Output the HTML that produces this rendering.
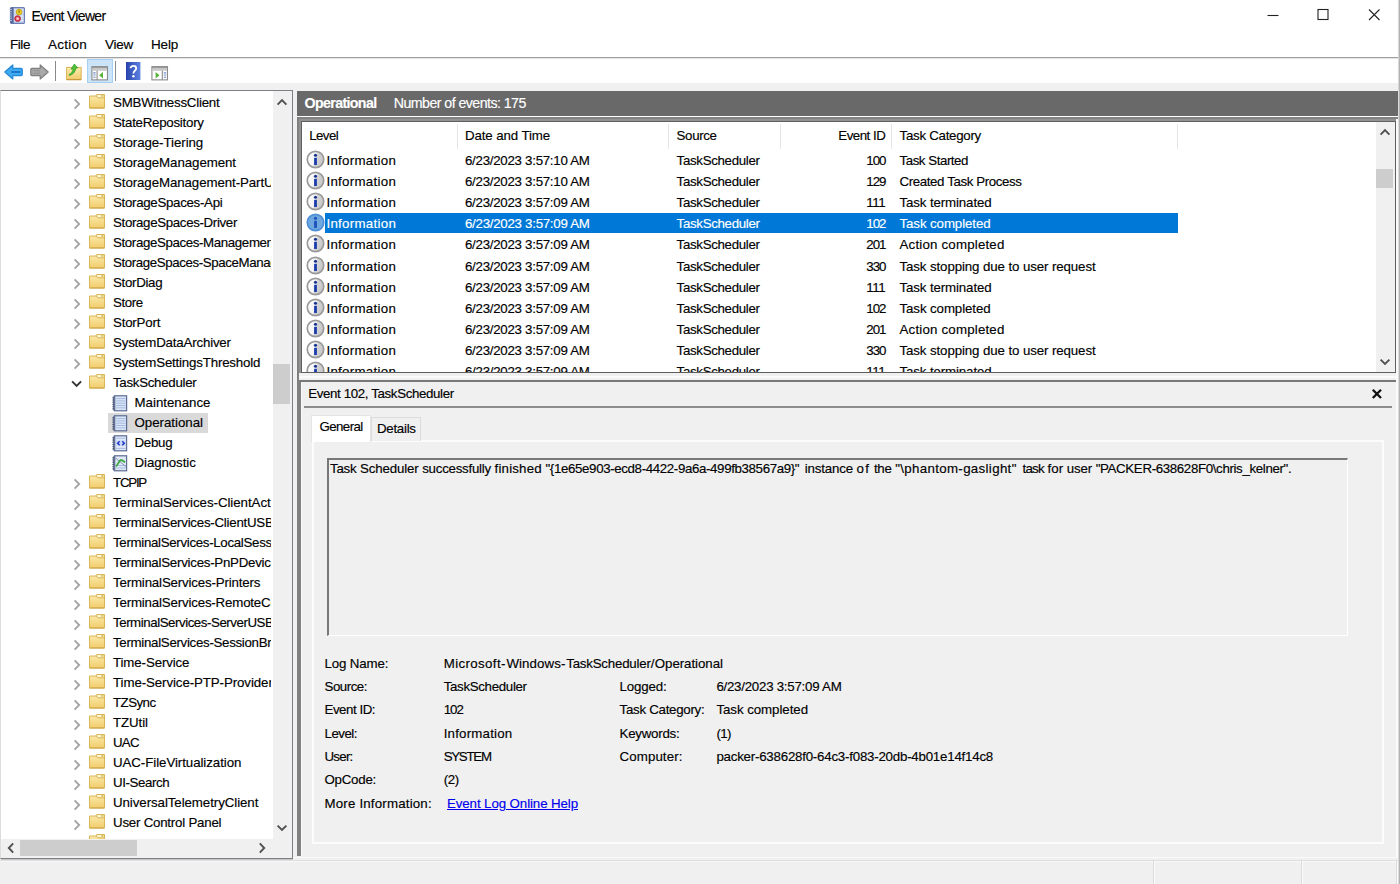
<!DOCTYPE html>
<html><head><meta charset="utf-8"><title>Event Viewer</title>
<style>
*{box-sizing:border-box;margin:0;padding:0}
html,body{width:1400px;height:884px;overflow:hidden;background:#fff}
body{position:relative;font-family:"Liberation Sans",sans-serif;font-size:13.3px;line-height:16px;color:#000;-webkit-text-stroke:0.15px}
.t{position:absolute;white-space:pre;line-height:16px;height:16px}
.b{position:absolute}
svg{position:absolute;overflow:visible}
.clip{position:absolute;overflow:hidden}
a.t{color:#0000ee;text-decoration:underline}

</style></head>
<body>
<svg width="0" height="0" style="position:absolute">
<defs>
<linearGradient id="gFold" x1="0" y1="0" x2="0" y2="1"><stop offset="0" stop-color="#fcebb0"/><stop offset="1" stop-color="#f1cd6c"/></linearGradient>
<linearGradient id="gInfo" x1="0" y1="0" x2="1" y2="0.3"><stop offset="0" stop-color="#ffffff"/><stop offset="0.55" stop-color="#f4f4f4"/><stop offset="0.62" stop-color="#d6d6d6"/><stop offset="1" stop-color="#c8c8c8"/></linearGradient>
<linearGradient id="gHelp" x1="0" y1="0" x2="1" y2="0"><stop offset="0" stop-color="#2743ab"/><stop offset="1" stop-color="#5d82e2"/></linearGradient>
<linearGradient id="gLog" x1="0" y1="0" x2="1" y2="0"><stop offset="0" stop-color="#dfe9f8"/><stop offset="1" stop-color="#ffffff"/></linearGradient>
</defs>
</svg>

<svg style="left:9px;top:7px" width="16" height="17" viewBox="0 0 16 17">
<rect x="1.6" y="0.6" width="13.8" height="15.8" rx="1" fill="#c9d5ee" stroke="#6a7fb4" stroke-width="1.2"/>
<rect x="1.6" y="0.6" width="3" height="15.8" fill="#55689c"/>
<path d="M0.3 2.5H3M0.3 4.7H3M0.3 6.9H3M0.3 9.1H3M0.3 11.3H3M0.3 13.5H3" stroke="#b9c2d8" stroke-width="0.9"/>
<path d="M5.5 9.2H14.5M5.5 11.4H14.5M5.5 13.6H14.5M5.5 3H14.5M5.5 5.2H14.5" stroke="#e8eefb" stroke-width="0.8"/>
<circle cx="10.1" cy="5" r="2.9" fill="#e8cf2e" stroke="#bfa313" stroke-width="0.8"/>
<rect x="9.6" y="3.2" width="1" height="2.6" fill="#7a6200"/>
<circle cx="8.6" cy="11.6" r="2.9" fill="#d8394a" stroke="#b12236" stroke-width="0.8"/>
<rect x="7.4" y="10.4" width="2.4" height="2.4" fill="#ffd9de"/>
</svg>
<span class="t" style="top:7.76px;left:31.40px;font-size:14px;letter-spacing:-0.686px">Event Viewer</span>
<svg style="left:1260px;top:0" width="140" height="30" viewBox="0 0 140 30">
<path d="M7.5 15.5H18.5" stroke="#222" stroke-width="1.1"/>
<rect x="58" y="9.5" width="10" height="10" fill="none" stroke="#222" stroke-width="1.1"/>
<path d="M109 9.5L119.5 20M119.5 9.5L109 20" stroke="#222" stroke-width="1.1"/>
</svg>
<span class="t" style="top:36.74px;left:10.00px;font-size:13.5px;letter-spacing:-0.441px">File</span>
<span class="t" style="top:36.74px;left:48.00px;font-size:13.5px;letter-spacing:0.245px">Action</span>
<span class="t" style="top:36.74px;left:105.00px;font-size:13.5px;letter-spacing:-0.258px">View</span>
<span class="t" style="top:36.74px;left:151.00px;font-size:13.5px;letter-spacing:-0.191px">Help</span>
<div class="b" style="left:0px;top:57px;width:1400px;height:1px;background:#a0a0a0"></div>
<div class="b" style="left:0px;top:58px;width:1400px;height:1px;background:#e4e4e4"></div>
<div class="b" style="left:87px;top:59px;width:26px;height:24px;background:#cce4f7;border:1px solid #a5d0f3"></div>
<div class="b" style="left:55px;top:61px;width:1px;height:20px;background:#8a8a8a"></div>
<div class="b" style="left:115px;top:61px;width:1px;height:20px;background:#8a8a8a"></div>
<svg style="left:4.2px;top:63.8px" width="19" height="16" viewBox="0 0 19 16">
<path d="M0.8 8 L8.8 1 V4.4 H17 Q18.3 4.4 18.3 5.7 V10.3 Q18.3 11.6 17 11.6 H8.8 V15 Z" fill="#3ea9ef" stroke="#2388d6" stroke-width="1.2" stroke-linejoin="round"/>
<path d="M8 8H15.6" stroke="#1a78cc" stroke-width="2" stroke-linecap="round"/>
</svg>
<svg style="left:29.8px;top:63.8px" width="19" height="16" viewBox="0 0 19 16">
<path d="M18.2 8 L10.2 1 V4.4 H1.8 Q0.8 4.4 0.8 5.4 V10.6 Q0.8 11.6 1.8 11.6 H10.2 V15 Z" fill="#a9a9a9" stroke="#7e7e7e" stroke-width="1.2" stroke-linejoin="round"/>
<path d="M2.6 6.8H10M2.6 9.2H10" stroke="#8e8e8e" stroke-width="1.1"/>
</svg>
<svg style="left:66px;top:63px" width="16" height="18" viewBox="0 0 16 18">
<path d="M0.6 4.4 H15.2 V16.6 H0.6 Z" fill="url(#gFold)" stroke="#d9b356" stroke-width="1"/>
<path d="M0.6 16.6H15.2" stroke="#c99a3b" stroke-width="1.2"/>
<path d="M3 11.6 C5.4 10.6 6.8 8.4 7.2 5.8 L5 6.2 L8.4 1 L11.8 5 L9.8 5.2 C9.4 8.8 7 11.6 3.4 12.6 Z" fill="#4fc23c" stroke="#2f9a24" stroke-width="0.7"/>
</svg>
<svg style="left:91.3px;top:65.5px" width="17.4" height="14.8" viewBox="0 0 18 16">
<rect x="0.6" y="0.6" width="16.8" height="14.4" fill="#fff" stroke="#8b8b8b" stroke-width="1.2"/>
<rect x="0.6" y="0.6" width="16.8" height="2.2" fill="#9a9a9a"/>
<rect x="1.2" y="2.8" width="15.6" height="2.4" fill="#c9c9c9"/>
<rect x="5.6" y="5" width="1.2" height="10" fill="#8b8b8b"/>
<path d="M2 7.4H4.6M2 9.8H4.6M2 12.2H4.6" stroke="#6f8fc8" stroke-width="1.2"/>
<path d="M12.6 6.6 V13.4 L8.4 10 Z" fill="#58b33a"/>
</svg>
<svg style="left:126px;top:62px" width="15" height="18" viewBox="0 0 15 18">
<rect x="0" y="0" width="14.4" height="18" fill="url(#gHelp)"/>
<path d="M4.6 6.2 C4.6 3.2 10.2 3.2 10.2 6.4 C10.2 8.6 7.4 8.8 7.4 11.6" fill="none" stroke="#fff" stroke-width="1.8"/>
<circle cx="7.4" cy="14.2" r="1.2" fill="#fff"/>
</svg>
<svg style="left:150.5px;top:65.5px" width="17.4" height="14.8" viewBox="0 0 18 16">
<rect x="0.6" y="0.6" width="16.8" height="14.4" fill="#fff" stroke="#8b8b8b" stroke-width="1.2"/>
<rect x="0.6" y="0.6" width="16.8" height="2.2" fill="#9a9a9a"/>
<rect x="1.2" y="2.8" width="15.6" height="2.4" fill="#c9c9c9"/>
<rect x="11.2" y="5" width="1.2" height="10" fill="#8b8b8b"/>
<path d="M13.4 7.4H16M13.4 9.8H16M13.4 12.2H16" stroke="#6f8fc8" stroke-width="1.2"/>
<path d="M4.6 6.6 V13.4 L8.8 10 Z" fill="#58b33a"/>
</svg>
<div class="b" style="left:0px;top:83px;width:1398px;height:801px;background:#f0f0f0"></div>
<div class="b" style="left:0px;top:90px;width:293px;height:769px;background:#fff;border:1px solid #7e7e84;border-left:1px solid #dcdcdc"></div>
<div class="b" style="left:1px;top:859px;width:292px;height:1px;background:#c8c8c8"></div>
<div class="b" style="left:273px;top:91px;width:19px;height:749px;background:#f0f0f0"></div>
<div class="b" style="left:273px;top:364px;width:17px;height:40px;background:#cdcdcd"></div>
<div class="b" style="left:1px;top:839px;width:272px;height:19px;background:#f0f0f0"></div>
<div class="b" style="left:273px;top:839px;width:19px;height:19px;background:#f0f0f0"></div>
<div class="b" style="left:20px;top:840px;width:117px;height:16px;background:#cdcdcd"></div>
<svg style="left:276px;top:98px" width="12" height="8"><path d="M1.6 6.6L6 2.2L10.4 6.6" fill="none" stroke="#505050" stroke-width="1.9"/></svg>
<svg style="left:276px;top:824px" width="12" height="8"><path d="M1.6 1.6L6 6L10.4 1.6" fill="none" stroke="#505050" stroke-width="1.9"/></svg>
<svg style="left:7px;top:842px" width="8" height="12"><path d="M6.2 1.4L1.8 6L6.2 10.6" fill="none" stroke="#505050" stroke-width="1.9"/></svg>
<svg style="left:258px;top:842px" width="8" height="12"><path d="M1.8 1.4L6.2 6L1.8 10.6" fill="none" stroke="#505050" stroke-width="1.9"/></svg>
<div class="clip" style="left:1px;top:91px;width:270.4px;height:747.5px">
<svg style="left:72px;top:7.3px" width="8" height="12" viewBox="0 0 8 12"><path d="M1.6 1.3 L6.2 6 L1.6 10.7" fill="none" stroke="#a3a3a3" stroke-width="1.8"/></svg>
<svg style="left:87.9px;top:2.6999999999999975px" width="16" height="14.5" viewBox="0 0 16 14.5"><path d="M0.5 2 H7 L7.7 0.5 H15.5 V14 H0.5 Z" fill="url(#gFold)" stroke="#d8b757" stroke-width="1"/>
  <path d="M7.2 2 Q8 3.9 9.8 3.9 H15.4" fill="none" stroke="#d2b050" stroke-width="0.9"/>
  <ellipse cx="10.2" cy="2" rx="1.8" ry="0.85" fill="#fffdf0"/>
  <rect x="12.4" y="1.2" width="2" height="1.4" fill="#cdb66a"/>
  <path d="M0.5 14 H15.5" stroke="#cfa646" stroke-width="1"/></svg>
<span class="t" style="top:3.85px;left:112.00px;letter-spacing:-0.226px">SMBWitnessClient</span>
<svg style="left:72px;top:27.31px" width="8" height="12" viewBox="0 0 8 12"><path d="M1.6 1.3 L6.2 6 L1.6 10.7" fill="none" stroke="#a3a3a3" stroke-width="1.8"/></svg>
<svg style="left:87.9px;top:22.71px" width="16" height="14.5" viewBox="0 0 16 14.5"><path d="M0.5 2 H7 L7.7 0.5 H15.5 V14 H0.5 Z" fill="url(#gFold)" stroke="#d8b757" stroke-width="1"/>
  <path d="M7.2 2 Q8 3.9 9.8 3.9 H15.4" fill="none" stroke="#d2b050" stroke-width="0.9"/>
  <ellipse cx="10.2" cy="2" rx="1.8" ry="0.85" fill="#fffdf0"/>
  <rect x="12.4" y="1.2" width="2" height="1.4" fill="#cdb66a"/>
  <path d="M0.5 14 H15.5" stroke="#cfa646" stroke-width="1"/></svg>
<span class="t" style="top:23.86px;left:112.00px;letter-spacing:-0.261px">StateRepository</span>
<svg style="left:72px;top:47.32px" width="8" height="12" viewBox="0 0 8 12"><path d="M1.6 1.3 L6.2 6 L1.6 10.7" fill="none" stroke="#a3a3a3" stroke-width="1.8"/></svg>
<svg style="left:87.9px;top:42.71999999999999px" width="16" height="14.5" viewBox="0 0 16 14.5"><path d="M0.5 2 H7 L7.7 0.5 H15.5 V14 H0.5 Z" fill="url(#gFold)" stroke="#d8b757" stroke-width="1"/>
  <path d="M7.2 2 Q8 3.9 9.8 3.9 H15.4" fill="none" stroke="#d2b050" stroke-width="0.9"/>
  <ellipse cx="10.2" cy="2" rx="1.8" ry="0.85" fill="#fffdf0"/>
  <rect x="12.4" y="1.2" width="2" height="1.4" fill="#cdb66a"/>
  <path d="M0.5 14 H15.5" stroke="#cfa646" stroke-width="1"/></svg>
<span class="t" style="top:43.87px;left:112.00px;letter-spacing:-0.064px">Storage-Tiering</span>
<svg style="left:72px;top:67.33px" width="8" height="12" viewBox="0 0 8 12"><path d="M1.6 1.3 L6.2 6 L1.6 10.7" fill="none" stroke="#a3a3a3" stroke-width="1.8"/></svg>
<svg style="left:87.9px;top:62.72999999999998px" width="16" height="14.5" viewBox="0 0 16 14.5"><path d="M0.5 2 H7 L7.7 0.5 H15.5 V14 H0.5 Z" fill="url(#gFold)" stroke="#d8b757" stroke-width="1"/>
  <path d="M7.2 2 Q8 3.9 9.8 3.9 H15.4" fill="none" stroke="#d2b050" stroke-width="0.9"/>
  <ellipse cx="10.2" cy="2" rx="1.8" ry="0.85" fill="#fffdf0"/>
  <rect x="12.4" y="1.2" width="2" height="1.4" fill="#cdb66a"/>
  <path d="M0.5 14 H15.5" stroke="#cfa646" stroke-width="1"/></svg>
<span class="t" style="top:63.88px;left:112.00px;letter-spacing:-0.070px">StorageManagement</span>
<svg style="left:72px;top:87.34px" width="8" height="12" viewBox="0 0 8 12"><path d="M1.6 1.3 L6.2 6 L1.6 10.7" fill="none" stroke="#a3a3a3" stroke-width="1.8"/></svg>
<svg style="left:87.9px;top:82.74000000000001px" width="16" height="14.5" viewBox="0 0 16 14.5"><path d="M0.5 2 H7 L7.7 0.5 H15.5 V14 H0.5 Z" fill="url(#gFold)" stroke="#d8b757" stroke-width="1"/>
  <path d="M7.2 2 Q8 3.9 9.8 3.9 H15.4" fill="none" stroke="#d2b050" stroke-width="0.9"/>
  <ellipse cx="10.2" cy="2" rx="1.8" ry="0.85" fill="#fffdf0"/>
  <rect x="12.4" y="1.2" width="2" height="1.4" fill="#cdb66a"/>
  <path d="M0.5 14 H15.5" stroke="#cfa646" stroke-width="1"/></svg>
<span class="t" style="top:83.89px;left:112.00px;letter-spacing:-0.091px">StorageManagement-PartUtil</span>
<svg style="left:72px;top:107.35px" width="8" height="12" viewBox="0 0 8 12"><path d="M1.6 1.3 L6.2 6 L1.6 10.7" fill="none" stroke="#a3a3a3" stroke-width="1.8"/></svg>
<svg style="left:87.9px;top:102.75000000000003px" width="16" height="14.5" viewBox="0 0 16 14.5"><path d="M0.5 2 H7 L7.7 0.5 H15.5 V14 H0.5 Z" fill="url(#gFold)" stroke="#d8b757" stroke-width="1"/>
  <path d="M7.2 2 Q8 3.9 9.8 3.9 H15.4" fill="none" stroke="#d2b050" stroke-width="0.9"/>
  <ellipse cx="10.2" cy="2" rx="1.8" ry="0.85" fill="#fffdf0"/>
  <rect x="12.4" y="1.2" width="2" height="1.4" fill="#cdb66a"/>
  <path d="M0.5 14 H15.5" stroke="#cfa646" stroke-width="1"/></svg>
<span class="t" style="top:103.90px;left:112.00px;letter-spacing:-0.305px">StorageSpaces-Api</span>
<svg style="left:72px;top:127.36px" width="8" height="12" viewBox="0 0 8 12"><path d="M1.6 1.3 L6.2 6 L1.6 10.7" fill="none" stroke="#a3a3a3" stroke-width="1.8"/></svg>
<svg style="left:87.9px;top:122.76000000000002px" width="16" height="14.5" viewBox="0 0 16 14.5"><path d="M0.5 2 H7 L7.7 0.5 H15.5 V14 H0.5 Z" fill="url(#gFold)" stroke="#d8b757" stroke-width="1"/>
  <path d="M7.2 2 Q8 3.9 9.8 3.9 H15.4" fill="none" stroke="#d2b050" stroke-width="0.9"/>
  <ellipse cx="10.2" cy="2" rx="1.8" ry="0.85" fill="#fffdf0"/>
  <rect x="12.4" y="1.2" width="2" height="1.4" fill="#cdb66a"/>
  <path d="M0.5 14 H15.5" stroke="#cfa646" stroke-width="1"/></svg>
<span class="t" style="top:123.91px;left:112.00px;letter-spacing:-0.341px">StorageSpaces-Driver</span>
<svg style="left:72px;top:147.37px" width="8" height="12" viewBox="0 0 8 12"><path d="M1.6 1.3 L6.2 6 L1.6 10.7" fill="none" stroke="#a3a3a3" stroke-width="1.8"/></svg>
<svg style="left:87.9px;top:142.77px" width="16" height="14.5" viewBox="0 0 16 14.5"><path d="M0.5 2 H7 L7.7 0.5 H15.5 V14 H0.5 Z" fill="url(#gFold)" stroke="#d8b757" stroke-width="1"/>
  <path d="M7.2 2 Q8 3.9 9.8 3.9 H15.4" fill="none" stroke="#d2b050" stroke-width="0.9"/>
  <ellipse cx="10.2" cy="2" rx="1.8" ry="0.85" fill="#fffdf0"/>
  <rect x="12.4" y="1.2" width="2" height="1.4" fill="#cdb66a"/>
  <path d="M0.5 14 H15.5" stroke="#cfa646" stroke-width="1"/></svg>
<span class="t" style="top:143.92px;left:112.00px;letter-spacing:-0.376px">StorageSpaces-ManagementAgent</span>
<svg style="left:72px;top:167.38px" width="8" height="12" viewBox="0 0 8 12"><path d="M1.6 1.3 L6.2 6 L1.6 10.7" fill="none" stroke="#a3a3a3" stroke-width="1.8"/></svg>
<svg style="left:87.9px;top:162.78px" width="16" height="14.5" viewBox="0 0 16 14.5"><path d="M0.5 2 H7 L7.7 0.5 H15.5 V14 H0.5 Z" fill="url(#gFold)" stroke="#d8b757" stroke-width="1"/>
  <path d="M7.2 2 Q8 3.9 9.8 3.9 H15.4" fill="none" stroke="#d2b050" stroke-width="0.9"/>
  <ellipse cx="10.2" cy="2" rx="1.8" ry="0.85" fill="#fffdf0"/>
  <rect x="12.4" y="1.2" width="2" height="1.4" fill="#cdb66a"/>
  <path d="M0.5 14 H15.5" stroke="#cfa646" stroke-width="1"/></svg>
<span class="t" style="top:163.93px;left:112.00px;letter-spacing:-0.393px">StorageSpaces-SpaceManager</span>
<svg style="left:72px;top:187.39px" width="8" height="12" viewBox="0 0 8 12"><path d="M1.6 1.3 L6.2 6 L1.6 10.7" fill="none" stroke="#a3a3a3" stroke-width="1.8"/></svg>
<svg style="left:87.9px;top:182.79px" width="16" height="14.5" viewBox="0 0 16 14.5"><path d="M0.5 2 H7 L7.7 0.5 H15.5 V14 H0.5 Z" fill="url(#gFold)" stroke="#d8b757" stroke-width="1"/>
  <path d="M7.2 2 Q8 3.9 9.8 3.9 H15.4" fill="none" stroke="#d2b050" stroke-width="0.9"/>
  <ellipse cx="10.2" cy="2" rx="1.8" ry="0.85" fill="#fffdf0"/>
  <rect x="12.4" y="1.2" width="2" height="1.4" fill="#cdb66a"/>
  <path d="M0.5 14 H15.5" stroke="#cfa646" stroke-width="1"/></svg>
<span class="t" style="top:183.94px;left:112.00px;letter-spacing:-0.304px">StorDiag</span>
<svg style="left:72px;top:207.4px" width="8" height="12" viewBox="0 0 8 12"><path d="M1.6 1.3 L6.2 6 L1.6 10.7" fill="none" stroke="#a3a3a3" stroke-width="1.8"/></svg>
<svg style="left:87.9px;top:202.80000000000004px" width="16" height="14.5" viewBox="0 0 16 14.5"><path d="M0.5 2 H7 L7.7 0.5 H15.5 V14 H0.5 Z" fill="url(#gFold)" stroke="#d8b757" stroke-width="1"/>
  <path d="M7.2 2 Q8 3.9 9.8 3.9 H15.4" fill="none" stroke="#d2b050" stroke-width="0.9"/>
  <ellipse cx="10.2" cy="2" rx="1.8" ry="0.85" fill="#fffdf0"/>
  <rect x="12.4" y="1.2" width="2" height="1.4" fill="#cdb66a"/>
  <path d="M0.5 14 H15.5" stroke="#cfa646" stroke-width="1"/></svg>
<span class="t" style="top:203.95px;left:112.00px;letter-spacing:-0.439px">Store</span>
<svg style="left:72px;top:227.41px" width="8" height="12" viewBox="0 0 8 12"><path d="M1.6 1.3 L6.2 6 L1.6 10.7" fill="none" stroke="#a3a3a3" stroke-width="1.8"/></svg>
<svg style="left:87.9px;top:222.81000000000003px" width="16" height="14.5" viewBox="0 0 16 14.5"><path d="M0.5 2 H7 L7.7 0.5 H15.5 V14 H0.5 Z" fill="url(#gFold)" stroke="#d8b757" stroke-width="1"/>
  <path d="M7.2 2 Q8 3.9 9.8 3.9 H15.4" fill="none" stroke="#d2b050" stroke-width="0.9"/>
  <ellipse cx="10.2" cy="2" rx="1.8" ry="0.85" fill="#fffdf0"/>
  <rect x="12.4" y="1.2" width="2" height="1.4" fill="#cdb66a"/>
  <path d="M0.5 14 H15.5" stroke="#cfa646" stroke-width="1"/></svg>
<span class="t" style="top:223.96px;left:112.00px;letter-spacing:-0.198px">StorPort</span>
<svg style="left:72px;top:247.42px" width="8" height="12" viewBox="0 0 8 12"><path d="M1.6 1.3 L6.2 6 L1.6 10.7" fill="none" stroke="#a3a3a3" stroke-width="1.8"/></svg>
<svg style="left:87.9px;top:242.82000000000002px" width="16" height="14.5" viewBox="0 0 16 14.5"><path d="M0.5 2 H7 L7.7 0.5 H15.5 V14 H0.5 Z" fill="url(#gFold)" stroke="#d8b757" stroke-width="1"/>
  <path d="M7.2 2 Q8 3.9 9.8 3.9 H15.4" fill="none" stroke="#d2b050" stroke-width="0.9"/>
  <ellipse cx="10.2" cy="2" rx="1.8" ry="0.85" fill="#fffdf0"/>
  <rect x="12.4" y="1.2" width="2" height="1.4" fill="#cdb66a"/>
  <path d="M0.5 14 H15.5" stroke="#cfa646" stroke-width="1"/></svg>
<span class="t" style="top:243.97px;left:112.00px;letter-spacing:-0.188px">SystemDataArchiver</span>
<svg style="left:72px;top:267.43px" width="8" height="12" viewBox="0 0 8 12"><path d="M1.6 1.3 L6.2 6 L1.6 10.7" fill="none" stroke="#a3a3a3" stroke-width="1.8"/></svg>
<svg style="left:87.9px;top:262.83px" width="16" height="14.5" viewBox="0 0 16 14.5"><path d="M0.5 2 H7 L7.7 0.5 H15.5 V14 H0.5 Z" fill="url(#gFold)" stroke="#d8b757" stroke-width="1"/>
  <path d="M7.2 2 Q8 3.9 9.8 3.9 H15.4" fill="none" stroke="#d2b050" stroke-width="0.9"/>
  <ellipse cx="10.2" cy="2" rx="1.8" ry="0.85" fill="#fffdf0"/>
  <rect x="12.4" y="1.2" width="2" height="1.4" fill="#cdb66a"/>
  <path d="M0.5 14 H15.5" stroke="#cfa646" stroke-width="1"/></svg>
<span class="t" style="top:263.98px;left:112.00px;letter-spacing:-0.188px">SystemSettingsThreshold</span>
<svg style="left:70px;top:289.04px" width="12" height="8" viewBox="0 0 12 8"><path d="M1.1 1.4 L5.6 5.9 L10.1 1.4" fill="none" stroke="#333" stroke-width="1.9"/></svg>
<svg style="left:87.9px;top:282.84000000000003px" width="16" height="14.5" viewBox="0 0 16 14.5"><path d="M0.5 2 H7 L7.7 0.5 H15.5 V14 H0.5 Z" fill="url(#gFold)" stroke="#d8b757" stroke-width="1"/>
  <path d="M7.2 2 Q8 3.9 9.8 3.9 H15.4" fill="none" stroke="#d2b050" stroke-width="0.9"/>
  <ellipse cx="10.2" cy="2" rx="1.8" ry="0.85" fill="#fffdf0"/>
  <rect x="12.4" y="1.2" width="2" height="1.4" fill="#cdb66a"/>
  <path d="M0.5 14 H15.5" stroke="#cfa646" stroke-width="1"/></svg>
<span class="t" style="top:283.99px;left:112.00px;letter-spacing:-0.294px">TaskScheduler</span>
<svg style="left:111px;top:304.45000000000005px" width="15.4" height="16.6" viewBox="0 0 16 17"><rect x="2.6" y="0.7" width="12.6" height="15.6" fill="#d9e4f6" stroke="#56668f" stroke-width="1.2"/>
  <rect x="1" y="1.2" width="2.4" height="14.8" fill="#6b7a9e"/>
  <path d="M4.4 3.6H14.2M4.4 6H14.2M4.4 8.4H14.2M4.4 10.8H14.2M4.4 13.2H14.2" stroke="#a3b9e0" stroke-width="1"/>
  <path d="M0.2 2.8H2.6M0.2 5.1H2.6M0.2 7.4H2.6M0.2 9.7H2.6M0.2 12H2.6M0.2 14.3H2.6" stroke="#3f4a66" stroke-width="0.8"/></svg>
<span class="t" style="top:304.00px;left:133.50px;letter-spacing:-0.013px">Maintenance</span>
<div class="b" style="left:107px;top:322px;width:100px;height:20px;background:#d9d9d9"></div>
<svg style="left:111px;top:324.46000000000004px" width="15.4" height="16.6" viewBox="0 0 16 17"><rect x="2.6" y="0.7" width="12.6" height="15.6" fill="#d9e4f6" stroke="#56668f" stroke-width="1.2"/>
  <rect x="1" y="1.2" width="2.4" height="14.8" fill="#6b7a9e"/>
  <path d="M4.4 3.6H14.2M4.4 6H14.2M4.4 8.4H14.2M4.4 10.8H14.2M4.4 13.2H14.2" stroke="#a3b9e0" stroke-width="1"/>
  <path d="M0.2 2.8H2.6M0.2 5.1H2.6M0.2 7.4H2.6M0.2 9.7H2.6M0.2 12H2.6M0.2 14.3H2.6" stroke="#3f4a66" stroke-width="0.8"/></svg>
<span class="t" style="top:324.01px;left:133.50px;letter-spacing:-0.023px">Operational</span>
<svg style="left:111px;top:344.47px" width="15.4" height="16.6" viewBox="0 0 16 17"><rect x="2.6" y="0.7" width="12.6" height="15.6" fill="#dfe8f8" stroke="#56668f" stroke-width="1.2"/>
  <rect x="1" y="1.2" width="2.4" height="14.8" fill="#6b7a9e"/>
  <path d="M4.4 3.2H14.2M4.4 13.8H14.2" stroke="#a3b9e0" stroke-width="1"/>
  <path d="M0.2 2.8H2.6M0.2 5.1H2.6M0.2 7.4H2.6M0.2 9.7H2.6M0.2 12H2.6M0.2 14.3H2.6" stroke="#3f4a66" stroke-width="0.8"/>
  <rect x="4" y="5.4" width="10.6" height="6" fill="#c9d8f6"/><path d="M8 6.4 L5.8 8.4 L8 10.4 M10.6 6.4 L12.8 8.4 L10.6 10.4" fill="none" stroke="#2238c4" stroke-width="1.5"/></svg>
<span class="t" style="top:344.02px;left:133.50px;letter-spacing:-0.257px">Debug</span>
<svg style="left:111px;top:364.48px" width="15.4" height="16.6" viewBox="0 0 16 17"><rect x="2.6" y="0.7" width="12.6" height="15.6" fill="#dfe8f4" stroke="#56668f" stroke-width="1.2"/>
  <rect x="1" y="1.2" width="2.4" height="14.8" fill="#6b7a9e"/>
  <path d="M4.4 10.8H14.2M4.4 13.4H14.2" stroke="#a3b9e0" stroke-width="1"/>
  <path d="M0.2 2.8H2.6M0.2 5.1H2.6M0.2 7.4H2.6M0.2 9.7H2.6M0.2 12H2.6M0.2 14.3H2.6" stroke="#3f4a66" stroke-width="0.8"/>
  <path d="M3.6 3 L14.6 12" stroke="#7a8aa8" stroke-width="0.9"/>
  <path d="M4 11.6 C6 10.8 6.8 6.2 9 5.2 C10.6 4.6 11.4 6.2 13.6 7.4" fill="none" stroke="#3aa53a" stroke-width="1.8"/></svg>
<span class="t" style="top:364.03px;left:133.50px;letter-spacing:-0.089px">Diagnostic</span>
<svg style="left:72px;top:387.49px" width="8" height="12" viewBox="0 0 8 12"><path d="M1.6 1.3 L6.2 6 L1.6 10.7" fill="none" stroke="#a3a3a3" stroke-width="1.8"/></svg>
<svg style="left:87.9px;top:382.89000000000004px" width="16" height="14.5" viewBox="0 0 16 14.5"><path d="M0.5 2 H7 L7.7 0.5 H15.5 V14 H0.5 Z" fill="url(#gFold)" stroke="#d8b757" stroke-width="1"/>
  <path d="M7.2 2 Q8 3.9 9.8 3.9 H15.4" fill="none" stroke="#d2b050" stroke-width="0.9"/>
  <ellipse cx="10.2" cy="2" rx="1.8" ry="0.85" fill="#fffdf0"/>
  <rect x="12.4" y="1.2" width="2" height="1.4" fill="#cdb66a"/>
  <path d="M0.5 14 H15.5" stroke="#cfa646" stroke-width="1"/></svg>
<span class="t" style="top:384.04px;left:112.00px;letter-spacing:-1.234px">TCPIP</span>
<svg style="left:72px;top:407.5px" width="8" height="12" viewBox="0 0 8 12"><path d="M1.6 1.3 L6.2 6 L1.6 10.7" fill="none" stroke="#a3a3a3" stroke-width="1.8"/></svg>
<svg style="left:87.9px;top:402.90000000000003px" width="16" height="14.5" viewBox="0 0 16 14.5"><path d="M0.5 2 H7 L7.7 0.5 H15.5 V14 H0.5 Z" fill="url(#gFold)" stroke="#d8b757" stroke-width="1"/>
  <path d="M7.2 2 Q8 3.9 9.8 3.9 H15.4" fill="none" stroke="#d2b050" stroke-width="0.9"/>
  <ellipse cx="10.2" cy="2" rx="1.8" ry="0.85" fill="#fffdf0"/>
  <rect x="12.4" y="1.2" width="2" height="1.4" fill="#cdb66a"/>
  <path d="M0.5 14 H15.5" stroke="#cfa646" stroke-width="1"/></svg>
<span class="t" style="top:404.05px;left:112.00px;letter-spacing:-0.045px">TerminalServices-ClientActiveXCore</span>
<svg style="left:72px;top:427.51px" width="8" height="12" viewBox="0 0 8 12"><path d="M1.6 1.3 L6.2 6 L1.6 10.7" fill="none" stroke="#a3a3a3" stroke-width="1.8"/></svg>
<svg style="left:87.9px;top:422.90999999999997px" width="16" height="14.5" viewBox="0 0 16 14.5"><path d="M0.5 2 H7 L7.7 0.5 H15.5 V14 H0.5 Z" fill="url(#gFold)" stroke="#d8b757" stroke-width="1"/>
  <path d="M7.2 2 Q8 3.9 9.8 3.9 H15.4" fill="none" stroke="#d2b050" stroke-width="0.9"/>
  <ellipse cx="10.2" cy="2" rx="1.8" ry="0.85" fill="#fffdf0"/>
  <rect x="12.4" y="1.2" width="2" height="1.4" fill="#cdb66a"/>
  <path d="M0.5 14 H15.5" stroke="#cfa646" stroke-width="1"/></svg>
<span class="t" style="top:424.06px;left:112.00px;letter-spacing:-0.246px">TerminalServices-ClientUSBDevices</span>
<svg style="left:72px;top:447.52px" width="8" height="12" viewBox="0 0 8 12"><path d="M1.6 1.3 L6.2 6 L1.6 10.7" fill="none" stroke="#a3a3a3" stroke-width="1.8"/></svg>
<svg style="left:87.9px;top:442.91999999999996px" width="16" height="14.5" viewBox="0 0 16 14.5"><path d="M0.5 2 H7 L7.7 0.5 H15.5 V14 H0.5 Z" fill="url(#gFold)" stroke="#d8b757" stroke-width="1"/>
  <path d="M7.2 2 Q8 3.9 9.8 3.9 H15.4" fill="none" stroke="#d2b050" stroke-width="0.9"/>
  <ellipse cx="10.2" cy="2" rx="1.8" ry="0.85" fill="#fffdf0"/>
  <rect x="12.4" y="1.2" width="2" height="1.4" fill="#cdb66a"/>
  <path d="M0.5 14 H15.5" stroke="#cfa646" stroke-width="1"/></svg>
<span class="t" style="top:444.07px;left:112.00px;letter-spacing:-0.316px">TerminalServices-LocalSessionManager</span>
<svg style="left:72px;top:467.53px" width="8" height="12" viewBox="0 0 8 12"><path d="M1.6 1.3 L6.2 6 L1.6 10.7" fill="none" stroke="#a3a3a3" stroke-width="1.8"/></svg>
<svg style="left:87.9px;top:462.92999999999995px" width="16" height="14.5" viewBox="0 0 16 14.5"><path d="M0.5 2 H7 L7.7 0.5 H15.5 V14 H0.5 Z" fill="url(#gFold)" stroke="#d8b757" stroke-width="1"/>
  <path d="M7.2 2 Q8 3.9 9.8 3.9 H15.4" fill="none" stroke="#d2b050" stroke-width="0.9"/>
  <ellipse cx="10.2" cy="2" rx="1.8" ry="0.85" fill="#fffdf0"/>
  <rect x="12.4" y="1.2" width="2" height="1.4" fill="#cdb66a"/>
  <path d="M0.5 14 H15.5" stroke="#cfa646" stroke-width="1"/></svg>
<span class="t" style="top:464.08px;left:112.00px;letter-spacing:-0.254px">TerminalServices-PnPDevices</span>
<svg style="left:72px;top:487.54px" width="8" height="12" viewBox="0 0 8 12"><path d="M1.6 1.3 L6.2 6 L1.6 10.7" fill="none" stroke="#a3a3a3" stroke-width="1.8"/></svg>
<svg style="left:87.9px;top:482.93999999999994px" width="16" height="14.5" viewBox="0 0 16 14.5"><path d="M0.5 2 H7 L7.7 0.5 H15.5 V14 H0.5 Z" fill="url(#gFold)" stroke="#d8b757" stroke-width="1"/>
  <path d="M7.2 2 Q8 3.9 9.8 3.9 H15.4" fill="none" stroke="#d2b050" stroke-width="0.9"/>
  <ellipse cx="10.2" cy="2" rx="1.8" ry="0.85" fill="#fffdf0"/>
  <rect x="12.4" y="1.2" width="2" height="1.4" fill="#cdb66a"/>
  <path d="M0.5 14 H15.5" stroke="#cfa646" stroke-width="1"/></svg>
<span class="t" style="top:484.09px;left:112.00px;letter-spacing:-0.171px">TerminalServices-Printers</span>
<svg style="left:72px;top:507.55px" width="8" height="12" viewBox="0 0 8 12"><path d="M1.6 1.3 L6.2 6 L1.6 10.7" fill="none" stroke="#a3a3a3" stroke-width="1.8"/></svg>
<svg style="left:87.9px;top:502.95000000000005px" width="16" height="14.5" viewBox="0 0 16 14.5"><path d="M0.5 2 H7 L7.7 0.5 H15.5 V14 H0.5 Z" fill="url(#gFold)" stroke="#d8b757" stroke-width="1"/>
  <path d="M7.2 2 Q8 3.9 9.8 3.9 H15.4" fill="none" stroke="#d2b050" stroke-width="0.9"/>
  <ellipse cx="10.2" cy="2" rx="1.8" ry="0.85" fill="#fffdf0"/>
  <rect x="12.4" y="1.2" width="2" height="1.4" fill="#cdb66a"/>
  <path d="M0.5 14 H15.5" stroke="#cfa646" stroke-width="1"/></svg>
<span class="t" style="top:504.10px;left:112.00px;letter-spacing:-0.180px">TerminalServices-RemoteConnectionManager</span>
<svg style="left:72px;top:527.56px" width="8" height="12" viewBox="0 0 8 12"><path d="M1.6 1.3 L6.2 6 L1.6 10.7" fill="none" stroke="#a3a3a3" stroke-width="1.8"/></svg>
<svg style="left:87.9px;top:522.9599999999999px" width="16" height="14.5" viewBox="0 0 16 14.5"><path d="M0.5 2 H7 L7.7 0.5 H15.5 V14 H0.5 Z" fill="url(#gFold)" stroke="#d8b757" stroke-width="1"/>
  <path d="M7.2 2 Q8 3.9 9.8 3.9 H15.4" fill="none" stroke="#d2b050" stroke-width="0.9"/>
  <ellipse cx="10.2" cy="2" rx="1.8" ry="0.85" fill="#fffdf0"/>
  <rect x="12.4" y="1.2" width="2" height="1.4" fill="#cdb66a"/>
  <path d="M0.5 14 H15.5" stroke="#cfa646" stroke-width="1"/></svg>
<span class="t" style="top:524.11px;left:112.00px;letter-spacing:-0.452px">TerminalServices-ServerUSBDevices</span>
<svg style="left:72px;top:547.57px" width="8" height="12" viewBox="0 0 8 12"><path d="M1.6 1.3 L6.2 6 L1.6 10.7" fill="none" stroke="#a3a3a3" stroke-width="1.8"/></svg>
<svg style="left:87.9px;top:542.97px" width="16" height="14.5" viewBox="0 0 16 14.5"><path d="M0.5 2 H7 L7.7 0.5 H15.5 V14 H0.5 Z" fill="url(#gFold)" stroke="#d8b757" stroke-width="1"/>
  <path d="M7.2 2 Q8 3.9 9.8 3.9 H15.4" fill="none" stroke="#d2b050" stroke-width="0.9"/>
  <ellipse cx="10.2" cy="2" rx="1.8" ry="0.85" fill="#fffdf0"/>
  <rect x="12.4" y="1.2" width="2" height="1.4" fill="#cdb66a"/>
  <path d="M0.5 14 H15.5" stroke="#cfa646" stroke-width="1"/></svg>
<span class="t" style="top:544.12px;left:112.00px;letter-spacing:-0.303px">TerminalServices-SessionBroker-Client</span>
<svg style="left:72px;top:567.58px" width="8" height="12" viewBox="0 0 8 12"><path d="M1.6 1.3 L6.2 6 L1.6 10.7" fill="none" stroke="#a3a3a3" stroke-width="1.8"/></svg>
<svg style="left:87.9px;top:562.98px" width="16" height="14.5" viewBox="0 0 16 14.5"><path d="M0.5 2 H7 L7.7 0.5 H15.5 V14 H0.5 Z" fill="url(#gFold)" stroke="#d8b757" stroke-width="1"/>
  <path d="M7.2 2 Q8 3.9 9.8 3.9 H15.4" fill="none" stroke="#d2b050" stroke-width="0.9"/>
  <ellipse cx="10.2" cy="2" rx="1.8" ry="0.85" fill="#fffdf0"/>
  <rect x="12.4" y="1.2" width="2" height="1.4" fill="#cdb66a"/>
  <path d="M0.5 14 H15.5" stroke="#cfa646" stroke-width="1"/></svg>
<span class="t" style="top:564.13px;left:112.00px;letter-spacing:-0.119px">Time-Service</span>
<svg style="left:72px;top:587.59px" width="8" height="12" viewBox="0 0 8 12"><path d="M1.6 1.3 L6.2 6 L1.6 10.7" fill="none" stroke="#a3a3a3" stroke-width="1.8"/></svg>
<svg style="left:87.9px;top:582.99px" width="16" height="14.5" viewBox="0 0 16 14.5"><path d="M0.5 2 H7 L7.7 0.5 H15.5 V14 H0.5 Z" fill="url(#gFold)" stroke="#d8b757" stroke-width="1"/>
  <path d="M7.2 2 Q8 3.9 9.8 3.9 H15.4" fill="none" stroke="#d2b050" stroke-width="0.9"/>
  <ellipse cx="10.2" cy="2" rx="1.8" ry="0.85" fill="#fffdf0"/>
  <rect x="12.4" y="1.2" width="2" height="1.4" fill="#cdb66a"/>
  <path d="M0.5 14 H15.5" stroke="#cfa646" stroke-width="1"/></svg>
<span class="t" style="top:584.14px;left:112.00px;letter-spacing:-0.093px">Time-Service-PTP-Provider</span>
<svg style="left:72px;top:607.6px" width="8" height="12" viewBox="0 0 8 12"><path d="M1.6 1.3 L6.2 6 L1.6 10.7" fill="none" stroke="#a3a3a3" stroke-width="1.8"/></svg>
<svg style="left:87.9px;top:603.0px" width="16" height="14.5" viewBox="0 0 16 14.5"><path d="M0.5 2 H7 L7.7 0.5 H15.5 V14 H0.5 Z" fill="url(#gFold)" stroke="#d8b757" stroke-width="1"/>
  <path d="M7.2 2 Q8 3.9 9.8 3.9 H15.4" fill="none" stroke="#d2b050" stroke-width="0.9"/>
  <ellipse cx="10.2" cy="2" rx="1.8" ry="0.85" fill="#fffdf0"/>
  <rect x="12.4" y="1.2" width="2" height="1.4" fill="#cdb66a"/>
  <path d="M0.5 14 H15.5" stroke="#cfa646" stroke-width="1"/></svg>
<span class="t" style="top:604.15px;left:112.00px;letter-spacing:-0.552px">TZSync</span>
<svg style="left:72px;top:627.61px" width="8" height="12" viewBox="0 0 8 12"><path d="M1.6 1.3 L6.2 6 L1.6 10.7" fill="none" stroke="#a3a3a3" stroke-width="1.8"/></svg>
<svg style="left:87.9px;top:623.01px" width="16" height="14.5" viewBox="0 0 16 14.5"><path d="M0.5 2 H7 L7.7 0.5 H15.5 V14 H0.5 Z" fill="url(#gFold)" stroke="#d8b757" stroke-width="1"/>
  <path d="M7.2 2 Q8 3.9 9.8 3.9 H15.4" fill="none" stroke="#d2b050" stroke-width="0.9"/>
  <ellipse cx="10.2" cy="2" rx="1.8" ry="0.85" fill="#fffdf0"/>
  <rect x="12.4" y="1.2" width="2" height="1.4" fill="#cdb66a"/>
  <path d="M0.5 14 H15.5" stroke="#cfa646" stroke-width="1"/></svg>
<span class="t" style="top:624.16px;left:112.00px;letter-spacing:-0.076px">TZUtil</span>
<svg style="left:72px;top:647.62px" width="8" height="12" viewBox="0 0 8 12"><path d="M1.6 1.3 L6.2 6 L1.6 10.7" fill="none" stroke="#a3a3a3" stroke-width="1.8"/></svg>
<svg style="left:87.9px;top:643.02px" width="16" height="14.5" viewBox="0 0 16 14.5"><path d="M0.5 2 H7 L7.7 0.5 H15.5 V14 H0.5 Z" fill="url(#gFold)" stroke="#d8b757" stroke-width="1"/>
  <path d="M7.2 2 Q8 3.9 9.8 3.9 H15.4" fill="none" stroke="#d2b050" stroke-width="0.9"/>
  <ellipse cx="10.2" cy="2" rx="1.8" ry="0.85" fill="#fffdf0"/>
  <rect x="12.4" y="1.2" width="2" height="1.4" fill="#cdb66a"/>
  <path d="M0.5 14 H15.5" stroke="#cfa646" stroke-width="1"/></svg>
<span class="t" style="top:644.17px;left:112.00px;letter-spacing:-0.759px">UAC</span>
<svg style="left:72px;top:667.63px" width="8" height="12" viewBox="0 0 8 12"><path d="M1.6 1.3 L6.2 6 L1.6 10.7" fill="none" stroke="#a3a3a3" stroke-width="1.8"/></svg>
<svg style="left:87.9px;top:663.03px" width="16" height="14.5" viewBox="0 0 16 14.5"><path d="M0.5 2 H7 L7.7 0.5 H15.5 V14 H0.5 Z" fill="url(#gFold)" stroke="#d8b757" stroke-width="1"/>
  <path d="M7.2 2 Q8 3.9 9.8 3.9 H15.4" fill="none" stroke="#d2b050" stroke-width="0.9"/>
  <ellipse cx="10.2" cy="2" rx="1.8" ry="0.85" fill="#fffdf0"/>
  <rect x="12.4" y="1.2" width="2" height="1.4" fill="#cdb66a"/>
  <path d="M0.5 14 H15.5" stroke="#cfa646" stroke-width="1"/></svg>
<span class="t" style="top:664.18px;left:112.00px;letter-spacing:-0.069px">UAC-FileVirtualization</span>
<svg style="left:72px;top:687.64px" width="8" height="12" viewBox="0 0 8 12"><path d="M1.6 1.3 L6.2 6 L1.6 10.7" fill="none" stroke="#a3a3a3" stroke-width="1.8"/></svg>
<svg style="left:87.9px;top:683.04px" width="16" height="14.5" viewBox="0 0 16 14.5"><path d="M0.5 2 H7 L7.7 0.5 H15.5 V14 H0.5 Z" fill="url(#gFold)" stroke="#d8b757" stroke-width="1"/>
  <path d="M7.2 2 Q8 3.9 9.8 3.9 H15.4" fill="none" stroke="#d2b050" stroke-width="0.9"/>
  <ellipse cx="10.2" cy="2" rx="1.8" ry="0.85" fill="#fffdf0"/>
  <rect x="12.4" y="1.2" width="2" height="1.4" fill="#cdb66a"/>
  <path d="M0.5 14 H15.5" stroke="#cfa646" stroke-width="1"/></svg>
<span class="t" style="top:684.19px;left:112.00px;letter-spacing:-0.395px">UI-Search</span>
<svg style="left:72px;top:707.65px" width="8" height="12" viewBox="0 0 8 12"><path d="M1.6 1.3 L6.2 6 L1.6 10.7" fill="none" stroke="#a3a3a3" stroke-width="1.8"/></svg>
<svg style="left:87.9px;top:703.05px" width="16" height="14.5" viewBox="0 0 16 14.5"><path d="M0.5 2 H7 L7.7 0.5 H15.5 V14 H0.5 Z" fill="url(#gFold)" stroke="#d8b757" stroke-width="1"/>
  <path d="M7.2 2 Q8 3.9 9.8 3.9 H15.4" fill="none" stroke="#d2b050" stroke-width="0.9"/>
  <ellipse cx="10.2" cy="2" rx="1.8" ry="0.85" fill="#fffdf0"/>
  <rect x="12.4" y="1.2" width="2" height="1.4" fill="#cdb66a"/>
  <path d="M0.5 14 H15.5" stroke="#cfa646" stroke-width="1"/></svg>
<span class="t" style="top:704.20px;left:112.00px;letter-spacing:-0.073px">UniversalTelemetryClient</span>
<svg style="left:72px;top:727.66px" width="8" height="12" viewBox="0 0 8 12"><path d="M1.6 1.3 L6.2 6 L1.6 10.7" fill="none" stroke="#a3a3a3" stroke-width="1.8"/></svg>
<svg style="left:87.9px;top:723.06px" width="16" height="14.5" viewBox="0 0 16 14.5"><path d="M0.5 2 H7 L7.7 0.5 H15.5 V14 H0.5 Z" fill="url(#gFold)" stroke="#d8b757" stroke-width="1"/>
  <path d="M7.2 2 Q8 3.9 9.8 3.9 H15.4" fill="none" stroke="#d2b050" stroke-width="0.9"/>
  <ellipse cx="10.2" cy="2" rx="1.8" ry="0.85" fill="#fffdf0"/>
  <rect x="12.4" y="1.2" width="2" height="1.4" fill="#cdb66a"/>
  <path d="M0.5 14 H15.5" stroke="#cfa646" stroke-width="1"/></svg>
<span class="t" style="top:724.21px;left:112.00px;letter-spacing:-0.225px">User Control Panel</span>
<svg style="left:72px;top:747.67px" width="8" height="12" viewBox="0 0 8 12"><path d="M1.6 1.3 L6.2 6 L1.6 10.7" fill="none" stroke="#a3a3a3" stroke-width="1.8"/></svg>
<svg style="left:87.9px;top:743.0699999999999px" width="16" height="14.5" viewBox="0 0 16 14.5"><path d="M0.5 2 H7 L7.7 0.5 H15.5 V14 H0.5 Z" fill="url(#gFold)" stroke="#d8b757" stroke-width="1"/>
  <path d="M7.2 2 Q8 3.9 9.8 3.9 H15.4" fill="none" stroke="#d2b050" stroke-width="0.9"/>
  <ellipse cx="10.2" cy="2" rx="1.8" ry="0.85" fill="#fffdf0"/>
  <rect x="12.4" y="1.2" width="2" height="1.4" fill="#cdb66a"/>
  <path d="M0.5 14 H15.5" stroke="#cfa646" stroke-width="1"/></svg>
</div>
<div class="b" style="left:297px;top:91px;width:1101px;height:25px;background:#696969"></div>
<span class="t" style="top:95.35px;left:304.50px;color:#fff;font-weight:700;font-size:14.2px;letter-spacing:-0.622px">Operational</span>
<span class="t" style="top:95.35px;left:393.80px;color:#fff;font-size:14.2px;letter-spacing:-0.549px">Number of events: 175</span>
<div class="b" style="left:297px;top:116px;width:1101px;height:1px;background:#ffffff"></div>
<div class="b" style="left:297px;top:117px;width:1101px;height:2px;background:#828282"></div>
<div class="b" style="left:297px;top:117px;width:4px;height:739px;background:#808080"></div>
<div class="b" style="left:301px;top:382px;width:1px;height:474px;background:#fbfbfb"></div>
<div class="b" style="left:1396px;top:119px;width:2px;height:738px;background:#fafafa"></div>
<div class="b" style="left:299px;top:119px;width:1097px;height:254px;background:#fff;border:2px solid #929292;border-right:0;border-bottom:0"></div>
<div class="b" style="left:301px;top:121px;width:1095px;height:252px;background:#fff;border:1px solid #5f5f5f"></div>
<div class="b" style="left:457px;top:124px;width:1px;height:25px;background:#e5e5e5"></div>
<div class="b" style="left:668px;top:124px;width:1px;height:25px;background:#e5e5e5"></div>
<div class="b" style="left:780px;top:124px;width:1px;height:25px;background:#e5e5e5"></div>
<div class="b" style="left:891px;top:124px;width:1px;height:25px;background:#e5e5e5"></div>
<div class="b" style="left:1177px;top:124px;width:1px;height:25px;background:#e5e5e5"></div>
<span class="t" style="top:128.35px;left:309.20px;letter-spacing:-0.559px">Level</span>
<span class="t" style="top:128.35px;left:465.00px;letter-spacing:-0.114px">Date and Time</span>
<span class="t" style="top:128.35px;left:676.60px;letter-spacing:-0.357px">Source</span>
<span class="t" style="top:128.35px;right:514.70px;letter-spacing:-0.500px">Event ID</span>
<span class="t" style="top:128.35px;left:899.50px;letter-spacing:-0.269px">Task Category</span>
<div class="b" style="left:1376px;top:122px;width:19px;height:250px;background:#f0f0f0"></div>
<div class="b" style="left:1376px;top:169px;width:17px;height:19px;background:#cdcdcd"></div>
<svg style="left:1379px;top:128px" width="12" height="8"><path d="M1.6 6.6L6 2.2L10.4 6.6" fill="none" stroke="#505050" stroke-width="1.9"/></svg>
<svg style="left:1379px;top:358px" width="12" height="8"><path d="M1.6 1.6L6 6L10.4 1.6" fill="none" stroke="#505050" stroke-width="1.9"/></svg>
<div class="clip" style="left:302px;top:149px;width:1074px;height:223px">
<svg style="left:3.6999999999999886px;top:0.699999999999994px" width="19" height="19" viewBox="0 0 19 19"><circle cx="9.5" cy="9.5" r="8.2" fill="url(#gInfo)" stroke="#9a9a9a" stroke-width="1.7"/>
  <circle cx="9.5" cy="5.3" r="1.55" fill="#17338f"/>
  <rect x="8.1" y="7.7" width="2.8" height="7.3" rx="0.5" fill="#1a3cac"/></svg>
<span class="t" style="top:3.65px;left:24.40px;letter-spacing:0.297px">Information</span>
<span class="t" style="top:3.65px;left:163.00px;letter-spacing:-0.276px">6/23/2023 3:57:10 AM</span>
<span class="t" style="top:3.65px;left:374.60px;letter-spacing:-0.325px">TaskScheduler</span>
<span class="t" style="top:3.65px;left:0.00px;letter-spacing:-1.062px;left:auto;right:490.7px">100</span>
<span class="t" style="top:3.65px;left:597.50px;letter-spacing:-0.451px">Task Started</span>
<svg style="left:3.6999999999999886px;top:21.869999999999983px" width="19" height="19" viewBox="0 0 19 19"><circle cx="9.5" cy="9.5" r="8.2" fill="url(#gInfo)" stroke="#9a9a9a" stroke-width="1.7"/>
  <circle cx="9.5" cy="5.3" r="1.55" fill="#17338f"/>
  <rect x="8.1" y="7.7" width="2.8" height="7.3" rx="0.5" fill="#1a3cac"/></svg>
<span class="t" style="top:24.82px;left:24.40px;letter-spacing:0.297px">Information</span>
<span class="t" style="top:24.82px;left:163.00px;letter-spacing:-0.276px">6/23/2023 3:57:10 AM</span>
<span class="t" style="top:24.82px;left:374.60px;letter-spacing:-0.325px">TaskScheduler</span>
<span class="t" style="top:24.82px;left:0.00px;letter-spacing:-1.062px;left:auto;right:490.7px">129</span>
<span class="t" style="top:24.82px;left:597.50px;letter-spacing:-0.391px">Created Task Process</span>
<svg style="left:3.6999999999999886px;top:43.04px" width="19" height="19" viewBox="0 0 19 19"><circle cx="9.5" cy="9.5" r="8.2" fill="url(#gInfo)" stroke="#9a9a9a" stroke-width="1.7"/>
  <circle cx="9.5" cy="5.3" r="1.55" fill="#17338f"/>
  <rect x="8.1" y="7.7" width="2.8" height="7.3" rx="0.5" fill="#1a3cac"/></svg>
<span class="t" style="top:45.99px;left:24.40px;letter-spacing:0.297px">Information</span>
<span class="t" style="top:45.99px;left:163.00px;letter-spacing:-0.276px">6/23/2023 3:57:09 AM</span>
<span class="t" style="top:45.99px;left:374.60px;letter-spacing:-0.325px">TaskScheduler</span>
<span class="t" style="top:45.99px;left:0.00px;letter-spacing:-0.406px;left:auto;right:490.7px">111</span>
<span class="t" style="top:45.99px;left:597.50px;letter-spacing:-0.124px">Task terminated</span>
<div class="b" style="left:23px;top:64px;width:853px;height:20.2px;background:#0078d7"></div>
<svg style="left:3.6999999999999886px;top:64.21000000000001px" width="19" height="19" viewBox="0 0 19 19"><circle cx="9.5" cy="9.5" r="8.2" fill="#6fa8de" stroke="#4d8fd6" stroke-width="1.7"/>
  <circle cx="9.5" cy="5.3" r="1.55" fill="#1c52bd"/>
  <rect x="8.1" y="7.7" width="2.8" height="7.3" rx="0.5" fill="#1c52bd"/></svg>
<span class="t" style="top:67.16px;left:24.40px;color:#fff;letter-spacing:0.297px">Information</span>
<span class="t" style="top:67.16px;left:163.00px;color:#fff;letter-spacing:-0.276px">6/23/2023 3:57:09 AM</span>
<span class="t" style="top:67.16px;left:374.60px;color:#fff;letter-spacing:-0.325px">TaskScheduler</span>
<span class="t" style="top:67.16px;left:0.00px;color:#fff;letter-spacing:-1.062px;left:auto;right:490.7px">102</span>
<span class="t" style="top:67.16px;left:597.50px;color:#fff;letter-spacing:-0.099px">Task completed</span>
<svg style="left:3.6999999999999886px;top:85.38px" width="19" height="19" viewBox="0 0 19 19"><circle cx="9.5" cy="9.5" r="8.2" fill="url(#gInfo)" stroke="#9a9a9a" stroke-width="1.7"/>
  <circle cx="9.5" cy="5.3" r="1.55" fill="#17338f"/>
  <rect x="8.1" y="7.7" width="2.8" height="7.3" rx="0.5" fill="#1a3cac"/></svg>
<span class="t" style="top:88.33px;left:24.40px;letter-spacing:0.297px">Information</span>
<span class="t" style="top:88.33px;left:163.00px;letter-spacing:-0.276px">6/23/2023 3:57:09 AM</span>
<span class="t" style="top:88.33px;left:374.60px;letter-spacing:-0.325px">TaskScheduler</span>
<span class="t" style="top:88.33px;left:0.00px;letter-spacing:-1.062px;left:auto;right:490.7px">201</span>
<span class="t" style="top:88.33px;left:597.50px;letter-spacing:0.188px">Action completed</span>
<svg style="left:3.6999999999999886px;top:106.54999999999998px" width="19" height="19" viewBox="0 0 19 19"><circle cx="9.5" cy="9.5" r="8.2" fill="url(#gInfo)" stroke="#9a9a9a" stroke-width="1.7"/>
  <circle cx="9.5" cy="5.3" r="1.55" fill="#17338f"/>
  <rect x="8.1" y="7.7" width="2.8" height="7.3" rx="0.5" fill="#1a3cac"/></svg>
<span class="t" style="top:109.50px;left:24.40px;letter-spacing:0.297px">Information</span>
<span class="t" style="top:109.50px;left:163.00px;letter-spacing:-0.276px">6/23/2023 3:57:09 AM</span>
<span class="t" style="top:109.50px;left:374.60px;letter-spacing:-0.325px">TaskScheduler</span>
<span class="t" style="top:109.50px;left:0.00px;letter-spacing:-1.062px;left:auto;right:490.7px">330</span>
<span class="t" style="top:109.50px;left:597.50px;letter-spacing:-0.108px">Task stopping due to user request</span>
<svg style="left:3.6999999999999886px;top:127.72px" width="19" height="19" viewBox="0 0 19 19"><circle cx="9.5" cy="9.5" r="8.2" fill="url(#gInfo)" stroke="#9a9a9a" stroke-width="1.7"/>
  <circle cx="9.5" cy="5.3" r="1.55" fill="#17338f"/>
  <rect x="8.1" y="7.7" width="2.8" height="7.3" rx="0.5" fill="#1a3cac"/></svg>
<span class="t" style="top:130.67px;left:24.40px;letter-spacing:0.297px">Information</span>
<span class="t" style="top:130.67px;left:163.00px;letter-spacing:-0.276px">6/23/2023 3:57:09 AM</span>
<span class="t" style="top:130.67px;left:374.60px;letter-spacing:-0.325px">TaskScheduler</span>
<span class="t" style="top:130.67px;left:0.00px;letter-spacing:-0.406px;left:auto;right:490.7px">111</span>
<span class="t" style="top:130.67px;left:597.50px;letter-spacing:-0.124px">Task terminated</span>
<svg style="left:3.6999999999999886px;top:148.88999999999996px" width="19" height="19" viewBox="0 0 19 19"><circle cx="9.5" cy="9.5" r="8.2" fill="url(#gInfo)" stroke="#9a9a9a" stroke-width="1.7"/>
  <circle cx="9.5" cy="5.3" r="1.55" fill="#17338f"/>
  <rect x="8.1" y="7.7" width="2.8" height="7.3" rx="0.5" fill="#1a3cac"/></svg>
<span class="t" style="top:151.84px;left:24.40px;letter-spacing:0.297px">Information</span>
<span class="t" style="top:151.84px;left:163.00px;letter-spacing:-0.276px">6/23/2023 3:57:09 AM</span>
<span class="t" style="top:151.84px;left:374.60px;letter-spacing:-0.325px">TaskScheduler</span>
<span class="t" style="top:151.84px;left:0.00px;letter-spacing:-1.062px;left:auto;right:490.7px">102</span>
<span class="t" style="top:151.84px;left:597.50px;letter-spacing:-0.099px">Task completed</span>
<svg style="left:3.6999999999999886px;top:170.06000000000003px" width="19" height="19" viewBox="0 0 19 19"><circle cx="9.5" cy="9.5" r="8.2" fill="url(#gInfo)" stroke="#9a9a9a" stroke-width="1.7"/>
  <circle cx="9.5" cy="5.3" r="1.55" fill="#17338f"/>
  <rect x="8.1" y="7.7" width="2.8" height="7.3" rx="0.5" fill="#1a3cac"/></svg>
<span class="t" style="top:173.01px;left:24.40px;letter-spacing:0.297px">Information</span>
<span class="t" style="top:173.01px;left:163.00px;letter-spacing:-0.276px">6/23/2023 3:57:09 AM</span>
<span class="t" style="top:173.01px;left:374.60px;letter-spacing:-0.325px">TaskScheduler</span>
<span class="t" style="top:173.01px;left:0.00px;letter-spacing:-1.062px;left:auto;right:490.7px">201</span>
<span class="t" style="top:173.01px;left:597.50px;letter-spacing:0.188px">Action completed</span>
<svg style="left:3.6999999999999886px;top:191.23px" width="19" height="19" viewBox="0 0 19 19"><circle cx="9.5" cy="9.5" r="8.2" fill="url(#gInfo)" stroke="#9a9a9a" stroke-width="1.7"/>
  <circle cx="9.5" cy="5.3" r="1.55" fill="#17338f"/>
  <rect x="8.1" y="7.7" width="2.8" height="7.3" rx="0.5" fill="#1a3cac"/></svg>
<span class="t" style="top:194.18px;left:24.40px;letter-spacing:0.297px">Information</span>
<span class="t" style="top:194.18px;left:163.00px;letter-spacing:-0.276px">6/23/2023 3:57:09 AM</span>
<span class="t" style="top:194.18px;left:374.60px;letter-spacing:-0.325px">TaskScheduler</span>
<span class="t" style="top:194.18px;left:0.00px;letter-spacing:-1.062px;left:auto;right:490.7px">330</span>
<span class="t" style="top:194.18px;left:597.50px;letter-spacing:-0.108px">Task stopping due to user request</span>
<svg style="left:3.6999999999999886px;top:212.4px" width="19" height="19" viewBox="0 0 19 19"><circle cx="9.5" cy="9.5" r="8.2" fill="url(#gInfo)" stroke="#9a9a9a" stroke-width="1.7"/>
  <circle cx="9.5" cy="5.3" r="1.55" fill="#17338f"/>
  <rect x="8.1" y="7.7" width="2.8" height="7.3" rx="0.5" fill="#1a3cac"/></svg>
<span class="t" style="top:215.35px;left:24.40px;letter-spacing:0.297px">Information</span>
<span class="t" style="top:215.35px;left:163.00px;letter-spacing:-0.276px">6/23/2023 3:57:09 AM</span>
<span class="t" style="top:215.35px;left:374.60px;letter-spacing:-0.325px">TaskScheduler</span>
<span class="t" style="top:215.35px;left:0.00px;letter-spacing:-0.406px;left:auto;right:490.7px">111</span>
<span class="t" style="top:215.35px;left:597.50px;letter-spacing:-0.124px">Task terminated</span>
</div>
<div class="b" style="left:299px;top:373px;width:1097px;height:7px;background:#f0f0f0"></div>
<div class="b" style="left:299px;top:376px;width:1097px;height:2px;background:#fafafa"></div>
<div class="b" style="left:299px;top:380px;width:1097px;height:2px;background:#787878"></div>
<span class="t" style="top:386.45px;left:308.20px;letter-spacing:-0.360px">Event 102, TaskScheduler</span>
<svg style="left:1371px;top:388px" width="12" height="12"><path d="M1.8 1.8L10 10M10 1.8L1.8 10" stroke="#111" stroke-width="2.3"/></svg>
<div class="b" style="left:304px;top:406px;width:1088px;height:2px;background:#8c8c8c"></div>
<div class="b" style="left:312px;top:440px;width:1072px;height:404px;background:#f0f0f0;border:2px solid #fcfcfc"></div>
<div class="b" style="left:371px;top:417px;width:50px;height:24px;background:#f0f0f0;border:1px solid #dcdcdc;border-bottom:none"></div>
<div class="b" style="left:311px;top:415px;width:60px;height:27px;background:#fff;border:1px solid #e4e4e4;border-bottom:none"></div>
<span class="t" style="top:418.65px;left:319.40px;letter-spacing:-0.573px">General</span>
<span class="t" style="top:420.75px;left:377.00px;letter-spacing:-0.279px">Details</span>
<div class="b" style="left:327px;top:458px;width:1021px;height:178px;background:#f0f0f0;border:1px solid #fff;border-top:2px solid #787878;border-left:2px solid #787878"></div>
<span class="t" style="top:461.35px;left:330.00px;letter-spacing:-0.236px">Task</span>
<span class="t" style="top:461.35px;left:360.10px;letter-spacing:-0.164px">Scheduler</span>
<span class="t" style="top:461.35px;left:422.20px;letter-spacing:-0.249px">successfully</span>
<span class="t" style="top:461.35px;left:494.60px;letter-spacing:0.170px">finished</span>
<span class="t" style="top:461.35px;left:545.50px;letter-spacing:-0.363px">&quot;{1e65e903-ecd8-4422-9a6a-499fb38567a9}&quot;</span>
<span class="t" style="top:461.35px;left:804.80px;letter-spacing:-0.179px">instance</span>
<span class="t" style="top:461.35px;left:856.60px;letter-spacing:1.303px">of</span>
<span class="t" style="top:461.35px;left:874.00px;letter-spacing:-0.333px">the</span>
<span class="t" style="top:461.35px;left:895.20px;letter-spacing:0.335px">&quot;\phantom-gaslight&quot;</span>
<span class="t" style="top:461.35px;left:1022.50px;letter-spacing:-0.773px">task</span>
<span class="t" style="top:461.35px;left:1047.50px;letter-spacing:0.023px">for</span>
<span class="t" style="top:461.35px;left:1066.80px;letter-spacing:-0.169px">user</span>
<span class="t" style="top:461.35px;left:1095.70px;letter-spacing:-0.353px">&quot;PACKER-638628F0\chris_kelner&quot;.</span>
<span class="t" style="top:655.65px;left:324.50px;letter-spacing:-0.139px">Log Name:</span>
<span class="t" style="top:678.95px;left:324.50px;letter-spacing:-0.475px">Source:</span>
<span class="t" style="top:702.35px;left:324.50px;letter-spacing:-0.465px">Event ID:</span>
<span class="t" style="top:725.65px;left:324.50px;letter-spacing:-0.497px">Level:</span>
<span class="t" style="top:749.05px;left:324.50px;letter-spacing:-0.756px">User:</span>
<span class="t" style="top:772.45px;left:324.50px;letter-spacing:-0.248px">OpCode:</span>
<span class="t" style="top:796.15px;left:324.50px;letter-spacing:0.182px">More Information:</span>
<span class="t" style="top:655.65px;left:443.70px;letter-spacing:0.372px">Microsoft-</span>
<span class="t" style="top:655.65px;left:506.40px;letter-spacing:0.103px">Windows-</span>
<span class="t" style="top:655.65px;left:566.20px;letter-spacing:-0.209px">TaskScheduler/</span>
<span class="t" style="top:655.65px;left:654.80px;letter-spacing:-0.059px">Operational</span>
<span class="t" style="top:678.95px;left:443.70px;letter-spacing:-0.325px">TaskScheduler</span>
<span class="t" style="top:702.35px;left:443.70px;letter-spacing:-0.962px">102</span>
<span class="t" style="top:725.65px;left:443.70px;letter-spacing:0.206px">Information</span>
<span class="t" style="top:749.05px;left:443.70px;letter-spacing:-1.281px">SYSTEM</span>
<span class="t" style="top:772.45px;left:443.70px;letter-spacing:-0.422px">(2)</span>
<span class="t" style="top:796.15px;left:447.00px;color:#0000ee;letter-spacing:-0.098px;text-decoration:underline">Event Log Online Help</span>
<span class="t" style="top:678.95px;left:619.50px;letter-spacing:-0.140px">Logged:</span>
<span class="t" style="top:702.35px;left:619.50px;letter-spacing:-0.271px">Task Category:</span>
<span class="t" style="top:725.65px;left:619.50px;letter-spacing:-0.231px">Keywords:</span>
<span class="t" style="top:749.05px;left:619.50px;letter-spacing:0.102px">Computer:</span>
<span class="t" style="top:678.95px;left:716.40px;letter-spacing:-0.251px">6/23/2023 3:57:09 AM</span>
<span class="t" style="top:702.35px;left:716.40px;letter-spacing:-0.056px">Task completed</span>
<span class="t" style="top:725.65px;left:716.40px;letter-spacing:-0.555px">(1)</span>
<span class="t" style="top:749.05px;left:716.40px;letter-spacing:-0.221px">packer-638628f0-64c3-f083-20db-4b01e14f14c8</span>
<div class="b" style="left:293px;top:857px;width:1105px;height:1px;background:#fafafa"></div>
<div class="b" style="left:0px;top:860px;width:1398px;height:1px;background:#dedede"></div>
<div class="b" style="left:0px;top:861px;width:1398px;height:1px;background:#f8f8f8"></div>
<div class="b" style="left:1153px;top:861px;width:1px;height:23px;background:#dcdcdc"></div>
<div class="b" style="left:1154px;top:861px;width:1px;height:23px;background:#fbfbfb"></div>
<div class="b" style="left:1301px;top:861px;width:1px;height:23px;background:#dcdcdc"></div>
<div class="b" style="left:1302px;top:861px;width:1px;height:23px;background:#fbfbfb"></div>
<div class="b" style="left:1396px;top:861px;width:1px;height:23px;background:#dcdcdc"></div>
<div class="b" style="left:1397px;top:861px;width:1px;height:23px;background:#fbfbfb"></div>
<div class="b" style="left:1398px;top:0px;width:1px;height:884px;background:#dadada"></div>
<div class="b" style="left:1399px;top:0px;width:1px;height:884px;background:#b2b2b2"></div>
</body></html>
